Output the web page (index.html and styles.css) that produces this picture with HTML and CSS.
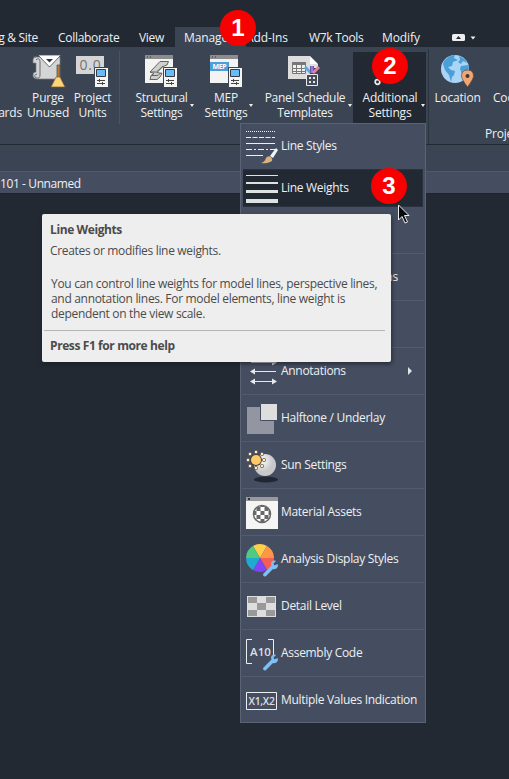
FILE: index.html
```html
<!DOCTYPE html>
<html lang="en">
<head>
<meta charset="utf-8">
<title>Manage - Additional Settings</title>
<link rel="stylesheet" href="styles.css">
</head>
<body>
<svg width="0" height="0" class="defs">
  <defs>
    <g id="panel">
      <path fill="#f4f4f4" stroke="#3b4452" d="M18.500 12.500h14v20h-14z"/>
      <path fill="#68bdf6" stroke="#343b46" d="M20.500 14.500h9v7h-9z"/>
      <path fill="none" stroke="#444" d="M21 25.500h8M21 28.500h8M23.500 24v3M26.500 27v3"/>
    </g>
    <path id="wrench" fill="#7cc0f5" d="M17 30 25.500 21.500C24 18 27 15.500 30 17L27.500 19.500 28.500 21.500 31.500 20C33 23 30 26 27 25L19.500 32.500Q17 33 17 30Z"/>
  </defs>
</svg>
<div class="app">
  <nav class="tabs">
    <span class="tab cut">g &amp; Site</span>
    <span class="tab">Collaborate</span>
    <span class="tab">View</span>
    <span class="tab active">Manage</span>
    <span class="tab">Add-Ins</span>
    <span class="tab">W7k Tools</span>
    <span class="tab">Modify</span>
    <svg class="collapse" width="26" height="9" viewBox="0 0 26 9"><rect y="1" width="13" height="7" rx="1.500" fill="#eee"/><path d="M4 6 6.500 3 9 6z" fill="#222933"/><path d="M18.500 3.500h5l-2.500 3z" fill="#eee"/></svg>
  </nav>
  <section class="ribbon">
    <div class="tool left"><span class="icon"></span><span>&nbsp;<br>ards</span></div>
    <div class="tool c2">
      <svg class="icon" viewBox="0 0 33 33"><path fill="#d4d5d5" stroke="#777d84" stroke-width=".7" d="M2 2h26v22H6q-5 0-5-4 0-3 3-3V8H1V5q0-3 3-3z"/><path d="M4 5q3-3 4 1v14q0 4-4 3-3-3 1-4" fill="none" stroke="#666d75"/><path fill="#fff" stroke="#444b55" stroke-width=".8" d="M6 0h23L17.500 12z"/><path d="M14 4h7l-3.500 3.500z" fill="#303641"/><path fill="#b97833" stroke="#4b4b4b" stroke-width=".7" d="M25 10h3v13h-3z"/><path fill="#ffd478" stroke="#805c30" stroke-width=".7" d="m24 22-5 10h14l-5-10z"/></svg>
      <span>Purge<br>Unused</span>
    </div>
    <div class="tool c3">
      <svg class="icon" viewBox="0 0 33 33"><path fill="#d5d5d5" d="M0 1h28v18H0z"/><text x="3.500" y="14.500" font-size="14" textLength="21" fill="#737373">0.0</text><use href="#panel"/></svg>
      <span>Project<br>Units</span>
    </div>
    <div class="divider"></div>
    <div class="tool c5">
      <svg class="icon" viewBox="0 0 33 33"><path fill="#f3f3f3" d="M0 0h28v28H0z"/><path fill="#8d8d8d" d="M0 0h28v4H0z"/><path d="M2 2h1M5 2h1" stroke="#333"/><path fill="#cfcfcb" stroke="#66655f" d="m5 17 10-10.500h8.500L22 10l-4 1.500-6 6 5 1-2 3.500-3 2.500H5l1-4 3-2z"/><path fill="none" stroke="#66655f" d="M5 17h6.500l6.500-6M6 20.500h7l3-3"/><use href="#panel"/></svg>
      <span>Structural<br>Settings</span><i class="caret"></i>
    </div>
    <div class="tool c7">
      <svg class="icon" viewBox="0 0 33 33"><path fill="#f3f3f3" d="M0 0h28v28H0z"/><path fill="#8d8d8d" d="M0 0h28v4H0z"/><path d="M2 2h1M5 2h1" stroke="#333"/><path fill="#4ba0db" d="M0 7h19v9H0z"/><text x="2.500" y="14" font-size="7" font-weight="700" textLength="14" fill="#fff">MEP</text><use href="#panel"/></svg>
      <span>MEP<br>Settings</span><i class="caret"></i>
    </div>
    <div class="tool c9">
      <svg class="icon" viewBox="0 0 33 33"><path fill="#dedede" d="M0 1h22v23H0z"/><path fill="#f0f0ed" stroke="#777" d="M4.500 7.500h13v11h-13z"/><path fill="#777" d="M4 7h14v3H4z"/><path stroke="#777" fill="none" d="M4 13.500h14M4 16.500h14M8.500 8v10M13.500 8v10"/><path d="M22 1v8h8z" fill="#fff"/><path d="M22 9h8v4h-8z" fill="#e1e1e1"/><path stroke="#5aace5" stroke-width="3" d="m17 12 6 6"/><path stroke="#3c4552" stroke-width="4" d="M24 11v8"/><path stroke="#9b77e6" stroke-width="3" d="M24 11v7"/><path stroke="#df839f" stroke-width="3" d="m31 12-6 6"/><path fill="#454c59" stroke="#e9e9e9" d="M18.500 19.500h11v11h-11z"/><path fill="#e8e8e8" d="M21 22h2v2h-2zm4 0h2v2h-2zm-4 4h2v2h-2zm4 0h2v2h-2z"/></svg>
      <span>Panel Schedule<br>Templates</span><i class="caret"></i>
    </div>
    <div class="tool c11 pressed">
      <svg class="icon" viewBox="0 0 33 33"><circle cx="4.500" cy="27" r="2.300" fill="none" stroke="#eee" stroke-width="1.700"/></svg>
      <span>Additional<br>Settings</span><i class="caret"></i>
    </div>
    <div class="tool c13">
      <svg class="icon" viewBox="0 0 33 33"><circle cx="14" cy="14" r="14" fill="#a9d5f7"/><path fill="#4b9ed6" d="M3 6q5-6 11-6l-1 3 4 2-5 2-1 4-4 1 3 3 4 1-1 4-2 2-1 5-2-7-4-5-2-6zM18 1q6 2 8 7l-4-2-2 3-3-2 2-2zm2 10 7-1q2 4-1 8l-3-3-2 4-2-5z"/><path fill="#f3a66d" stroke="#5a4b49" stroke-width=".7" d="M26.500 15q6 0 6 6 0 3-6 11-6-8-6-11 0-6 6-6z"/><circle cx="26.500" cy="21" r="2" fill="#343b45"/></svg>
      <span>Location</span>
    </div>
    <div class="tool last"><span class="icon"></span><span>Coordinates</span></div>
    <div class="project">Project Location</div>
  </section>
  <div class="options"></div>
  <div class="viewtab">101 - Unnamed</div>
  <main class="canvas"></main>

  <div class="menu">
    <div class="item first"><svg viewBox="0 0 33 33"><path fill="none" stroke="#eee" d="M0 1.500h29" stroke-dasharray="1 1"/><path fill="none" stroke="#eee" d="M0 7.500h29" stroke-dasharray="5 1.500"/><path fill="none" stroke="#eee" d="M0 13.500h29M0 25.500h17"/><path fill="none" stroke="#eee" d="M0 19.500h29" stroke-dasharray="6 2 2 2"/><path d="M15 33q4-1 5-5 2-3 5-1 3 4-1 5-4 2-9 1z" fill="#dcb17d"/><path d="m24 26 6-8 2 2-5 8z" fill="#eef7fa"/></svg><span>Line Styles</span></div>
    <div class="item selected"><svg viewBox="0 0 33 33"><path fill="#dfe2e3" d="M0 3h32v1H0zM0 10h32v2H0zM0 18h32v3H0zM0 27h32v4H0z"/></svg><span>Line Weights</span></div>
    <div class="item third"><svg></svg><span>Line Patterns</span></div>
    <div class="item"><svg></svg><span class="templates">Detail View Options</span></div>
    <div class="item"><svg></svg><span></span></div>
    <div class="item annotations"><svg viewBox="0 0 33 33"><path stroke="#e5e8ed" d="M4 7.500h25M4 16.500h25M4 26.500h25"/><path fill="#e5e8ed" d="m30 7.500-5-3v6zM3 16.500l5-3v6zm0 10 5-3v6zm27 0-5-3v6z"/></svg><span>Annotations</span><i class="submenu"></i></div>
    <div class="item"><svg viewBox="0 0 33 33"><path fill="#9396a0" d="M1 4h27v27H1z"/><path fill="#dedede" stroke="#454e60" d="M14.500.5h17v17h-17z"/></svg><span>Halftone / Underlay</span></div>
    <div class="item"><svg viewBox="0 0 33 33"><defs><radialGradient id="ball" cx=".35" cy=".3"><stop stop-color="#fff"/><stop offset="1" stop-color="#c8c8ca"/></radialGradient></defs><ellipse cx="20" cy="29.500" rx="12" ry="3" fill="#202733"/><circle cx="19" cy="15" r="11" fill="url(#ball)"/><circle cx="10" cy="10" r="6" fill="#45434a"/><circle cx="10" cy="10" r="5" fill="#ffc966"/><g fill="#fff0c0" stroke="#544c47" stroke-width=".7"><circle cx="10" cy="2" r="1.700"/><circle cx="16" cy="4" r="1.700"/><circle cx="18" cy="10" r="1.700"/><circle cx="16" cy="16" r="1.700"/><circle cx="10" cy="18" r="1.700"/><circle cx="4" cy="16" r="1.700"/><circle cx="2" cy="10" r="1.700"/><circle cx="4" cy="4" r="1.700"/></g></svg><span>Sun Settings</span></div>
    <div class="item"><svg viewBox="0 0 33 33"><defs><pattern id="check" x="2.500" y="2" width="8" height="8" patternUnits="userSpaceOnUse"><path fill="#fff" d="M0 0h8v8H0z"/><path fill="#686868" d="M0 0h4v4H0zM4 4h4v4H4z"/></pattern></defs><path fill="#f5f5f5" d="M0 0h32v32H0z"/><path fill="#999" d="M0 0h32v4H0z"/><path d="M2 2h2" stroke="#333" stroke-width="2"/><circle cx="16" cy="17" r="8.500" fill="url(#check)" stroke="#666" stroke-width="1.500"/></svg><span>Material Assets</span></div>
    <div class="item"><svg viewBox="0 0 33 33"><g transform="translate(14 14)"><path fill="#ffce4b" d="M0 0-7-12A14 14 0 0 1 7-12z"/><path fill="#ff9744" d="m0 0 7-12A14 14 0 0 1 14 0z"/><path fill="#f45f55" d="M0 0h14A14 14 0 0 1 7 12z"/><path fill="#8045f5" d="m0 0 7 12a14 14 0 0 1-14 0z"/><path fill="#22a9d0" d="m0 0-7 12A14 14 0 0 1-14 0z"/><path fill="#50ca80" d="M0 0h-14A14 14 0 0 1-7-12z"/></g><use href="#wrench"/></svg><span>Analysis Display Styles</span></div>
    <div class="item"><svg viewBox="0 0 33 33"><path fill="#dedede" d="M1 5h29v21H1z"/><path fill="#999" d="M2 6h9v6H2zm18 0h9v6h-9zM11 12h9v7h-9zM2 19h9v6H2zm18 0h9v6h-9z"/></svg><span>Detail Level</span></div>
    <div class="item"><svg viewBox="0 0 33 33"><path fill="none" stroke="#eceef1" d="M6 1.500H.5v24H6M22 1.500h5.500v16"/><text x="4" y="17.500" font-size="11.500" font-weight="600" textLength="20.500" fill="#dedfe2">A10</text><use href="#wrench"/></svg><span>Assembly Code</span></div>
    <div class="item"><svg viewBox="0 0 33 33"><path fill="none" stroke="#eceef1" d="M.5 7.500h30v17H.5z"/><text x="2.500" y="20" font-size="10.500" font-weight="600" textLength="26" lengthAdjust="spacingAndGlyphs" fill="#dedfe2">X1,X2</text></svg><span>Multiple Values Indication</span></div>
  </div>
  <aside class="tooltip">
    <h1>Line Weights</h1>
    <p class="summary">Creates or modifies line weights.</p>
    <p class="detail">You can control line weights for model lines, perspective lines,<br>and annotation lines. For model elements, line weight is<br>dependent on the view scale.</p>
    <footer>Press F1 for more help</footer>
  </aside>
  <b class="badge one">1</b><b class="badge two">2</b><b class="badge three">3</b>
  <svg class="cursor" width="14" height="22" viewBox="0 0 14 22"><path fill="#080a0e" stroke="#eee" d="M1.500 1v15l3.500-3.500 3 6.500 2.500-1-3-6.500h4.500z"/></svg>
</div>
</body>
</html>
```
FILE: styles.css
```css
* { box-sizing: border-box; }
body { margin: 0; font: 12px/15px "Open Sans", sans-serif; letter-spacing: -.3px; color: #eef0f2; background: #222933; }
.defs { position: absolute; }
.app { position: relative; display: flex; flex-direction: column; width: 509px; height: 779px; overflow: hidden; }

.tabs { height: 47px; padding-top: 27px; display: grid; grid-template-columns: 58px 81px 36px 71px 63px 73px 70px 57px; white-space: nowrap; line-height: 22px; }
.tab { height: 20px; }
.tab.cut { width: 38px; display: flex; justify-content: flex-end; }
.tab.active { background: #3b4452; padding-left: 9px; letter-spacing: -.1px; }
.tab:nth-child(5), .tab:nth-child(7) { letter-spacing: -.1px; }
.collapse { margin-top: 6px; }

.ribbon { height: 98px; flex: none; background: #3b4452; border-bottom: 1px solid #222933; letter-spacing: -.2px; display: grid; grid-template-columns: 25px 46px 43px 18px 58px 13px 46px 13px 86px 5px 73px 2px 59px 22px; grid-template-rows: 76px 21px; }
.tool { position: relative; grid-row: 1; padding-top: 8px; display: flex; flex-direction: column; align-items: center; text-align: center; white-space: nowrap; }
.icon { display: block; flex: none; width: 33px; height: 33px; margin-bottom: 2px; overflow: visible; }
.left { align-items: flex-end; padding-right: 3px; }
.c5 { grid-column: 5; }
.c5 span, .c9 span { letter-spacing: -.32px; }
.c5 span, .c11 span { padding-left: 1px; }
.c7 { grid-column: 7; }
.c9 { grid-column: 9; }
.c11 { grid-column: 11; }
.c13 { grid-column: 13; }
.c5 .icon { margin-left: 1px; }
.c9 .icon { margin-left: -1px; }
.last { grid-column: 14; align-items: flex-start; padding-left: 6px; }
.pressed { background: #222933; margin-top: 5px; padding-top: 3px; }
.divider { grid-column: 4; width: 1px; height: 73px; margin: 4px 0 0 5px; background: #4b5463; }
.c13::before { content: ""; position: absolute; left: 0; top: 2px; width: 1px; height: 95px; background: #2c3440; }
.caret { position: absolute; right: -4px; top: 57px; border: solid transparent; border-width: 3px 2.5px 0; border-top-color: #eef0f2; }
.pressed .caret { right: 1px; top: 52px; }
.project { grid-row: 2; grid-column: 13 / 15; padding: 3px 0 0 57px; white-space: nowrap; }
.options { height: 26px; flex: none; background: #3b4452; }
.viewtab { height: 22px; flex: none; background: #454e60; border-top: 1px solid #505968; line-height: 23px; letter-spacing: -.4px; }
.canvas { flex: 1; border-top: 1px solid #1d242d; background: #222933; }

.menu { position: absolute; left: 240px; top: 123px; width: 186px; height: 600px; background: #454e60; border: 1px solid #5b6475; display: flex; flex-direction: column; }
.item { height: 47px; flex: none; display: flex; align-items: center; padding-left: 6px; margin: 0 1px; border-bottom: 1px solid #525c6e; white-space: nowrap; }
.item span { padding-bottom: 2px; }
.item svg { width: 33px; height: 33px; flex: none; margin: 0 1px 0 -1px; overflow: visible; }
.item:last-child { border: 0; }
.item.first { height: 45px; border: 0; }
.item.selected { height: 38px; margin: 0 2px; padding-left: 5px; background: #222933; border: 1px solid #293440; border-left: 0; }
.item.third { height: 47px; }
.templates { width: 117px; text-align: right; }
.annotations { position: relative; }
.submenu { position: absolute; right: 12px; top: 19px; border: solid transparent; border-width: 4px 0 4px 4px; border-left-color: #e0e4e8; }
.item:nth-child(n+7) svg { position: relative; top: 1px; left: -1px; }
.item.first svg, .item.selected svg { position: relative; left: -1px; }

.tooltip { position: absolute; left: 42px; top: 214px; width: 349px; height: 148px; padding: 8px 7px 0 8px; border-radius: 2px; background: #eee; color: #4b4b4b; box-shadow: 1px 2px 4px #171c24b0; white-space: nowrap; }
.tooltip h1 { margin: 0; font: 700 12px/15px "Open Sans", sans-serif; letter-spacing: -.4px; }
.tooltip p { margin: 0; }
.tooltip .summary { padding-top: 6px; letter-spacing: -.33px; }
.tooltip .detail { padding: 18px 0 0 1px; letter-spacing: -.31px; }
.tooltip footer { margin: 9px -1px 0 -6px; border-top: 1px solid #b6b6b6; padding: 7px 0 0 6px; font-weight: 700; letter-spacing: -.4px; }
.badge { position: absolute; width: 36px; height: 36px; border-radius: 50%; background: #f80000; color: #fff; font: 700 24px/36px "Liberation Sans", sans-serif; text-align: center; letter-spacing: 0; }
.one { left: 220px; top: 10px; }
.two { left: 372px; top: 48px; }
.three { left: 371px; top: 168px; }
.cursor { position: absolute; left: 397px; top: 204px; }
```
